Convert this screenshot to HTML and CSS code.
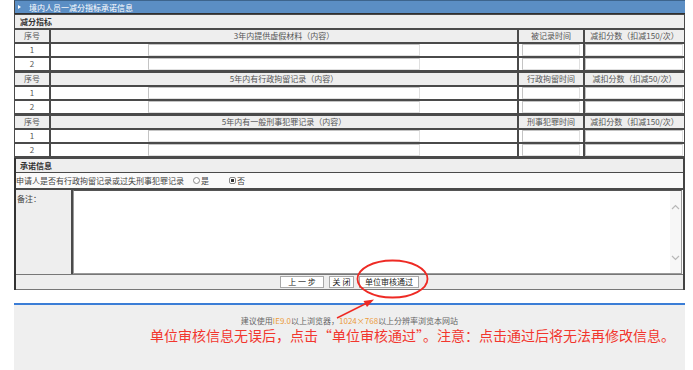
FILE: index.html
```html
<!DOCTYPE html>
<html lang="zh-CN">
<head>
    <meta charset="UTF-8">
    <title>境内人员一减分指标承诺信息</title>
    <link rel="stylesheet" href="styles.css">
</head>
<body>
    <div class="page">
        <div class="panel">
            <div class="title-bar"><span class="tri"></span>境内人员一减分指标承诺信息</div>

            <table class="grid">
                <colgroup>
                    <col class="c-no">
                    <col class="c-text">
                    <col class="c-time">
                    <col class="c-score">
                </colgroup>
                <tr class="section"><td colspan="4">减分指标</td></tr>

                <tr class="head"><td>序号</td><td>3年内提供虚假材料（内容）</td><td>被记录时间</td><td>减扣分数（扣减150/次）</td></tr>
                <tr><td>1</td><td><input class="in in-long"></td><td><input class="in in-time"></td><td><input class="in in-score"></td></tr>
                <tr class="last"><td>2</td><td><input class="in in-long"></td><td><input class="in in-time"></td><td><input class="in in-score"></td></tr>

                <tr class="head"><td>序号</td><td>5年内有行政拘留记录（内容）</td><td>行政拘留时间</td><td>减扣分数（扣减50/次）</td></tr>
                <tr><td>1</td><td><input class="in in-long"></td><td><input class="in in-time"></td><td><input class="in in-score"></td></tr>
                <tr class="last"><td>2</td><td><input class="in in-long"></td><td><input class="in in-time"></td><td><input class="in in-score"></td></tr>

                <tr class="head"><td>序号</td><td>5年内有一般刑事犯罪记录（内容）</td><td>刑事犯罪时间</td><td>减扣分数（扣减150/次）</td></tr>
                <tr><td>1</td><td><input class="in in-long"></td><td><input class="in in-time"></td><td><input class="in in-score"></td></tr>
                <tr class="last"><td>2</td><td><input class="in in-long"></td><td><input class="in in-time"></td><td><input class="in in-score"></td></tr>
            </table>

            <div class="commit">
                <div class="commit-title">承诺信息</div>
                <div class="pledge">
                    申请人是否有行政拘留记录或过失刑事犯罪记录
                    <span class="opt"><span class="radio"></span>是</span>
                    <span class="opt"><span class="radio checked"></span>否</span>
                </div>
                <div class="remark">
                    <div class="remark-label">备注：</div>
                    <div class="remark-box">
                        <textarea></textarea>
                        <div class="scroll">
                            <svg width="9" height="6" viewBox="0 0 9 6"><path d="M1 5 L4.5 1.5 L8 5" fill="none" stroke="#b8b8b8" stroke-width="1.2"/></svg>
                            <svg width="9" height="6" viewBox="0 0 9 6"><path d="M1 1 L4.5 4.5 L8 1" fill="none" stroke="#b8b8b8" stroke-width="1.2"/></svg>
                        </div>
                    </div>
                </div>
                <div class="actions">
                    <button class="btn btn-prev">上 一 步</button>
                    <button class="btn btn-close">关 闭</button>
                    <button class="btn btn-pass">单位审核通过</button>
                </div>
            </div>
        </div>

        <div class="footer">
            <p class="tip">建议使用<span class="hl">IE9.0</span>以上浏览器，<span class="hl">1024×768</span>以上分辨率浏览本网站</p>
        </div>

        <p class="annotation">单位审核信息无误后，点击“单位审核通过”。注意：点击通过后将无法再修改信息。</p>

        <svg class="callout" width="693" height="370" viewBox="0 0 693 370">
            <ellipse cx="392.5" cy="279" rx="35" ry="18.5" fill="none" stroke="#ee2a24" stroke-width="1.8"/>
            <path d="M337 318 L366 303.5" stroke="#ee2a24" stroke-width="1.5"/>
            <path d="M374 299.5 L363.5 301 L367 307 Z" fill="#ee2a24"/>
        </svg>
    </div>
</body>
</html>
```

FILE: styles.css
```css
body {
    margin: 0;
    font-family: "Noto Sans CJK SC", "Liberation Sans", sans-serif;
    font-size: 8px;
    color: #444;
    background-color: #fff;
}
.page {
    position: relative;
    width: 693px;
    height: 370px;
    overflow: hidden;
}
.panel {
    margin-left: 14px;
    width: 671px;
}
.title-bar {
    display: flex;
    align-items: center;
    height: 12px;
    background-color: #5b8ec4;
    color: #fff;
    border-top: 1px solid #3d648c;
    border-bottom: 1px solid #2f2f2f;
    border-left: 1px solid #444;
}
.tri {
    width: 0;
    height: 0;
    margin: 0 8px 0 3px;
    border-left: 3px solid #fff;
    border-top: 2.5px solid transparent;
    border-bottom: 2.5px solid transparent;
}
.grid {
    width: 671px;
    border-collapse: separate;
    border-spacing: 0;
    table-layout: fixed;
}
.c-no { width: 36px; }
.c-text { width: 468px; }
.c-time { width: 66px; }
.c-score { width: 101px; }
.grid td {
    border: 1px solid #4a4a4a;
    padding: 0;
    height: 12px;
    line-height: 12px;
    text-align: center;
    background-color: #fff;
    color: #555;
}
.grid .section td {
    text-align: left;
    padding-left: 5px;
    font-weight: bold;
    color: #333;
    background-color: #eee;
    height: 13px;
}
.grid .head td {
    background-color: #eee;
}
.grid .last td {
    border-bottom-width: 2px;
}
.in {
    display: block;
    box-sizing: border-box;
    height: 12px;
    margin: 0 auto;
    padding: 0;
    border: 1px solid #c4c4c4;
    border-right-color: #e0e0e0;
    border-bottom-color: #e0e0e0;
    background-color: #fff;
}
.in-long { width: 272px; }
.in-time { width: 58px; }
.in-score {
    width: 98px;
    margin-left: 0;
}
.commit {
    border-left: 2px solid #333;
    border-right: 2px solid #444;
}
.commit-title {
    height: 13px;
    line-height: 13px;
    padding-left: 4px;
    font-weight: bold;
    color: #333;
    background-color: #eee;
    border-top: 1px solid #4a4a4a;
    border-bottom: 1px solid #4a4a4a;
}
.pledge {
    display: flex;
    align-items: center;
    height: 15px;
    padding-left: 0;
    color: #444;
    background-color: #fafafa;
    border-bottom: 2px solid #4a4a4a;
}
.opt {
    display: flex;
    align-items: center;
    margin-left: 9px;
    margin-right: 11px;
}
.radio {
    box-sizing: border-box;
    width: 7px;
    height: 7px;
    margin-right: 1px;
    border: 1px solid #888;
    border-radius: 50%;
    background-color: #fff;
}
.radio.checked {
    border-radius: 2px;
    background: radial-gradient(circle, #333 0 1.4px, #fff 1.8px);
}
.remark {
    display: flex;
    height: 84px;
    border-bottom: 1px solid #777;
}
.remark-label {
    width: 54px;
    padding: 3px 0 0 1px;
    background-color: #eee;
    border-right: 2px solid #4a4a4a;
}
.remark-box {
    flex: 1;
    display: flex;
    margin-right: 1px;
    border: 1px solid #9a9a9a;
    border-top-color: #555;
    background-color: #fff;
}
.remark-box textarea {
    flex: 1;
    border: none;
    resize: none;
    outline: none;
    margin: 0;
    padding: 0;
}
.scroll {
    width: 11px;
    display: flex;
    flex-direction: column;
    justify-content: space-between;
    align-items: center;
    padding: 13px 0 12px;
    background-color: #f7f7f7;
}
.actions {
    display: flex;
    justify-content: center;
    align-items: center;
    gap: 5px;
    height: 14px;
    background-color: #eee;
    border-bottom: 1px solid #777;
}
.btn {
    box-sizing: border-box;
    height: 12px;
    padding: 0;
    font-family: inherit;
    font-size: 8px;
    line-height: 10px;
    color: #222;
    background-color: #fff;
    border: 1px solid #a8a8a8;
}
.btn-prev { width: 44px; }
.btn-close { width: 25px; }
.btn-pass { width: 60px; }
.footer {
    margin: 13px 0 0 14px;
    width: 671px;
    height: 66px;
    background-color: #efefef;
    border-top: 2px solid #3b7dd6;
}
.tip {
    margin: 0;
    padding-top: 11px;
    line-height: 9px;
    text-align: center;
    color: #666;
}
.hl {
    color: #eb9a3a;
}
.annotation {
    position: absolute;
    left: 150px;
    top: 328px;
    margin: 0;
    font-size: 14px;
    line-height: 14px;
    color: #f2362e;
    white-space: nowrap;
}
.callout {
    position: absolute;
    left: 0;
    top: 0;
    pointer-events: none;
}
```
